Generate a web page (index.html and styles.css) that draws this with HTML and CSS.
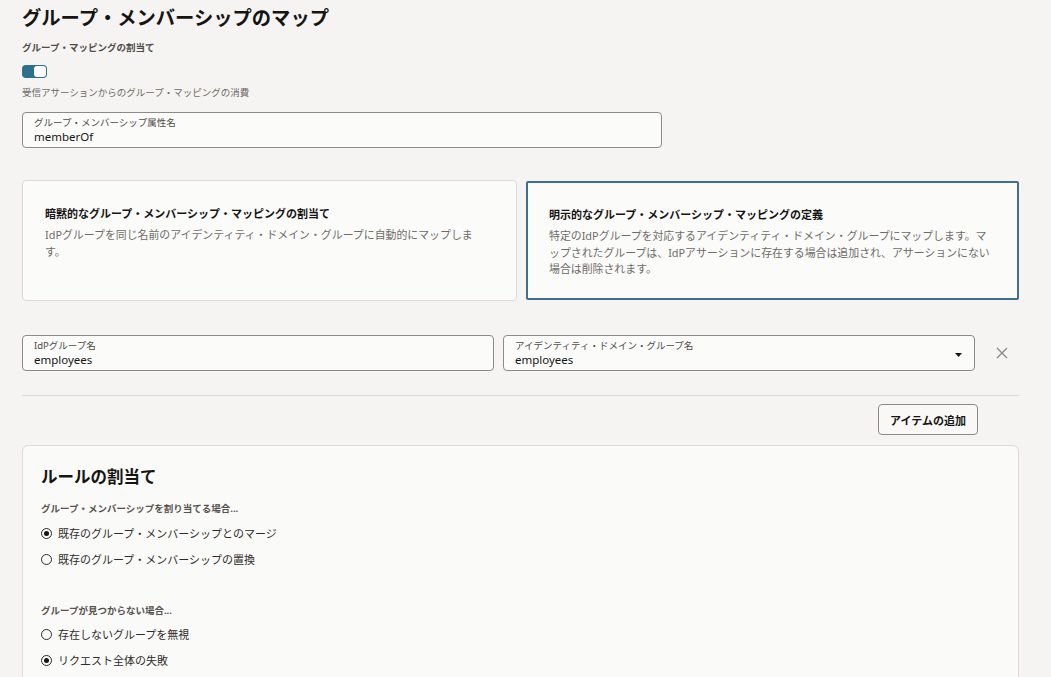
FILE: index.html
```html
<!DOCTYPE html>
<html lang="ja">
<head>
    <meta charset="UTF-8">
    <meta name="viewport" content="width=device-width, initial-scale=1.0">
    <title>グループ・メンバーシップのマップ</title>
    <link rel="stylesheet" href="styles.css">
</head>
<body>
    <div class="page">
        <h1 class="page-title">グループ・メンバーシップのマップ</h1>

        <div class="field-label">グループ・マッピングの割当て</div>
        <div class="switch on"><span class="knob"></span></div>
        <div class="help">受信アサーションからのグループ・マッピングの消費</div>

        <div class="text-field attr-field">
            <div class="tf-label">グループ・メンバーシップ属性名</div>
            <div class="tf-value">memberOf</div>
        </div>

        <div class="cards">
            <div class="card">
                <div class="card-title">暗黙的なグループ・メンバーシップ・マッピングの割当て</div>
                <div class="card-text">IdPグループを同じ名前のアイデンティティ・ドメイン・グループに自動的にマップします。</div>
            </div>
            <div class="card selected">
                <div class="card-title">明示的なグループ・メンバーシップ・マッピングの定義</div>
                <div class="card-text">特定のIdPグループを対応するアイデンティティ・ドメイン・グループにマップします。マップされたグループは、IdPアサーションに存在する場合は追加され、アサーションにない場合は削除されます。</div>
            </div>
        </div>

        <div class="map-row">
            <div class="text-field">
                <div class="tf-label">IdPグループ名</div>
                <div class="tf-value">employees</div>
            </div>
            <div class="text-field select">
                <div>
                    <div class="tf-label">アイデンティティ・ドメイン・グループ名</div>
                    <div class="tf-value">employees</div>
                </div>
                <svg class="caret" width="7" height="4" viewBox="0 0 7 4"><path d="M0 0h7L3.5 4z" fill="#161513"/></svg>
            </div>
            <button class="remove" aria-label="削除">
                <svg width="12" height="12" viewBox="0 0 12 12"><path d="M1 1l10 10M11 1L1 11" stroke="#8b8781" stroke-width="1.3" fill="none"/></svg>
            </button>
        </div>

        <div class="divider"></div>

        <div class="actions">
            <button class="btn">アイテムの追加</button>
        </div>

        <div class="rules">
            <h2 class="rules-title">ルールの割当て</h2>

            <div class="group-label">グループ・メンバーシップを割り当てる場合...</div>
            <div class="radio checked"><span class="dot"></span>既存のグループ・メンバーシップとのマージ</div>
            <div class="radio"><span class="dot"></span>既存のグループ・メンバーシップの置換</div>

            <div class="group-label second">グループが見つからない場合...</div>
            <div class="radio"><span class="dot"></span>存在しないグループを無視</div>
            <div class="radio checked"><span class="dot"></span>リクエスト全体の失敗</div>
        </div>
    </div>
</body>
</html>
```

FILE: styles.css
```css
* {
    box-sizing: border-box;
}
body {
    margin: 0;
    background-color: #f5f4f2;
    color: #161513;
    font-family: "Noto Sans", "Noto Sans CJK JP", sans-serif;
}
.page {
    padding: 6px 32px 0 22px;
}
.page-title {
    margin: 0;
    font-size: 19.3px;
    line-height: 24px;
    font-weight: 700;
}
.field-label {
    margin-top: 11px;
    font-size: 9.5px;
    line-height: 14px;
    font-weight: 700;
    color: #4f4c48;
}
.switch {
    margin-top: 10px;
    width: 25px;
    height: 13px;
    border-radius: 4px;
    background-color: #2e6f8e;
    display: flex;
    justify-content: flex-end;
    align-items: center;
    padding: 1px;
}
.switch .knob {
    width: 12px;
    height: 11px;
    border-radius: 3px;
    background-color: #fff;
}
.help {
    margin-top: 8px;
    font-size: 9.5px;
    line-height: 13px;
    color: #6f6b66;
}
.text-field {
    height: 36px;
    border: 1px solid #8e8a85;
    border-radius: 4px;
    background-color: #fbfbfa;
    padding: 3px 11px 0;
}
.attr-field {
    margin-top: 13px;
    width: 640px;
}
.tf-label {
    font-size: 9.5px;
    line-height: 13px;
    color: #4f4c48;
}
.tf-value {
    font-size: 11.5px;
    line-height: 16px;
    color: #161513;
}
.cards {
    margin-top: 32px;
    display: flex;
    gap: 9px;
}
.card {
    flex: 0 0 495px;
    height: 121px;
    border: 1px solid #dedbd7;
    border-radius: 4px;
    background-color: #fbfbfa;
    padding: 25px 38px 0 22px;
}
.card.selected {
    flex: 1;
    border: 2px solid #3e6f8f;
    border-radius: 2px;
    height: 119px;
    margin-top: 1px;
    padding: 24px 22px 0 21px;
}
.card-title {
    font-size: 11px;
    line-height: 16px;
    font-weight: 700;
}
.card-text {
    margin-top: 5px;
    font-size: 10.9px;
    line-height: 16.5px;
    color: #6f6b66;
    line-break: anywhere;
}
.map-row {
    margin-top: 34px;
    display: flex;
    align-items: center;
    gap: 9px;
}
.map-row .text-field {
    flex: 0 0 472px;
}
.select {
    display: flex;
    justify-content: space-between;
    align-items: center;
    padding-right: 12px;
}
.select > div {
    align-self: flex-start;
}
.remove {
    flex: 1;
    height: 36px;
    border: 0;
    background: none;
    padding: 0;
    display: flex;
    align-items: center;
    justify-content: center;
}
.divider {
    margin-top: 24px;
    height: 1px;
    background-color: #dcd9d5;
}
.actions {
    display: flex;
    justify-content: flex-end;
    padding-right: 41px;
    margin-top: 8px;
}
.btn {
    height: 31px;
    padding: 0 11px;
    border: 1px solid #8e8a85;
    border-radius: 4px;
    background-color: #f9f8f7;
    font-family: inherit;
    font-size: 11px;
    font-weight: 700;
    color: #161513;
}
.rules {
    margin-top: 10px;
    border: 1px solid #dedbd7;
    border-radius: 6px;
    background-color: #fafaf9;
    padding: 19px 18px 30px;
}
.rules-title {
    margin: 0;
    font-size: 16.5px;
    line-height: 24px;
    font-weight: 700;
}
.group-label {
    margin-top: 13px;
    font-size: 9.5px;
    line-height: 14px;
    font-weight: 700;
    color: #55524e;
}
.group-label.second {
    margin-top: 32px;
}
.radio {
    display: flex;
    align-items: center;
    gap: 6px;
    height: 26px;
    font-size: 11px;
    color: #2e2c29;
}
.group-label + .radio {
    margin-top: 4px;
}
.group-label.second + .radio {
    margin-top: 3px;
}
.radio .dot {
    width: 11px;
    height: 11px;
    border: 1px solid #2e2c29;
    border-radius: 50%;
    display: flex;
    align-items: center;
    justify-content: center;
}
.radio.checked .dot::after {
    content: "";
    width: 5px;
    height: 5px;
    border-radius: 50%;
    background-color: #161513;
}
```
